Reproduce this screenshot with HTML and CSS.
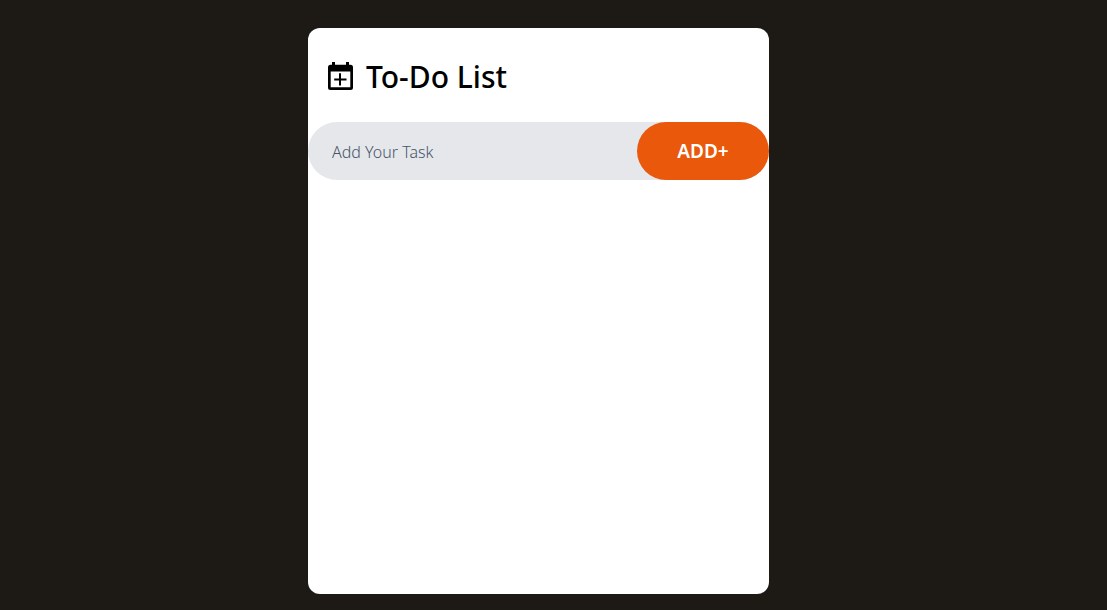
FILE: index.html
```html
<!DOCTYPE html>
<html lang="en">
<head>
<meta charset="utf-8">
<meta name="viewport" content="width=device-width, initial-scale=1">
<title>To-Do List</title>
<link rel="stylesheet" href="styles.css">
</head>
<body>
<main class="card">
  <header class="heading">
    <svg class="heading-icon" viewBox="0 0 25 28" aria-hidden="true">
      <path fill-rule="evenodd" d="M4 0h3v2.800h11V0h3v2.800h1.500a2.500 2.500 0 0 1 2.500 2.500v20.200a2.500 2.500 0 0 1-2.500 2.500h-20A2.500 2.500 0 0 1 0 25.500V5.300A2.500 2.500 0 0 1 2.500 2.800H4zM2.700 9.500v15.800h19.600V9.500z"/>
      <path d="M11 11.200h2v5.200h5.500v2H13v5.200h-2v-5.200H6.200v-2H11z"/>
    </svg>
    <h1 class="title">To-Do List</h1>
  </header>
  <form class="task-form">
    <input class="task-input" type="text" placeholder="Add Your Task" aria-label="Add Your Task">
    <button class="add-button" type="button">ADD+</button>
  </form>
</main>
</body>
</html>
```
FILE: styles.css
```css
* {
  box-sizing: border-box;
}

body {
  margin: 0;
  min-height: 100vh;
  padding: 28px 30px 16px 0;
  display: flex;
  justify-content: center;
  background: #1d1a16;
  font-family: "Noto Sans", "Open Sans", sans-serif;
}

.card {
  width: 100%;
  max-width: 461px;
  background: #fff;
  border-radius: 12px;
}

.heading {
  display: flex;
  align-items: center;
  gap: 13px;
  padding: 28px 20px 24px;
}

.heading-icon {
  width: 25px;
  height: 28px;
  margin-bottom: 2px;
}

.title {
  margin: 0;
  font-size: 30px;
  line-height: 42px;
  font-weight: 500;
  color: #000;
}

.task-form {
  display: flex;
  background: #e5e7eb;
  border-radius: 29px;
}

.task-input {
  flex: 1;
  min-width: 0;
  height: 58px;
  padding: 2px 8px 0 24px;
  border: 0;
  outline: 0;
  background: transparent;
  font-family: "Noto Sans", "Open Sans", sans-serif;
  font-size: 16px;
  font-weight: 300;
  color: #475569;
}

.task-input::placeholder {
  color: #475569;
  opacity: 1;
}

.add-button {
  width: 132px;
  height: 58px;
  padding: 0;
  border: 0;
  border-radius: 29px;
  background: #ea580c;
  color: #fff;
  font-family: inherit;
  font-size: 19px;
  font-weight: 600;
  cursor: pointer;
}
```
